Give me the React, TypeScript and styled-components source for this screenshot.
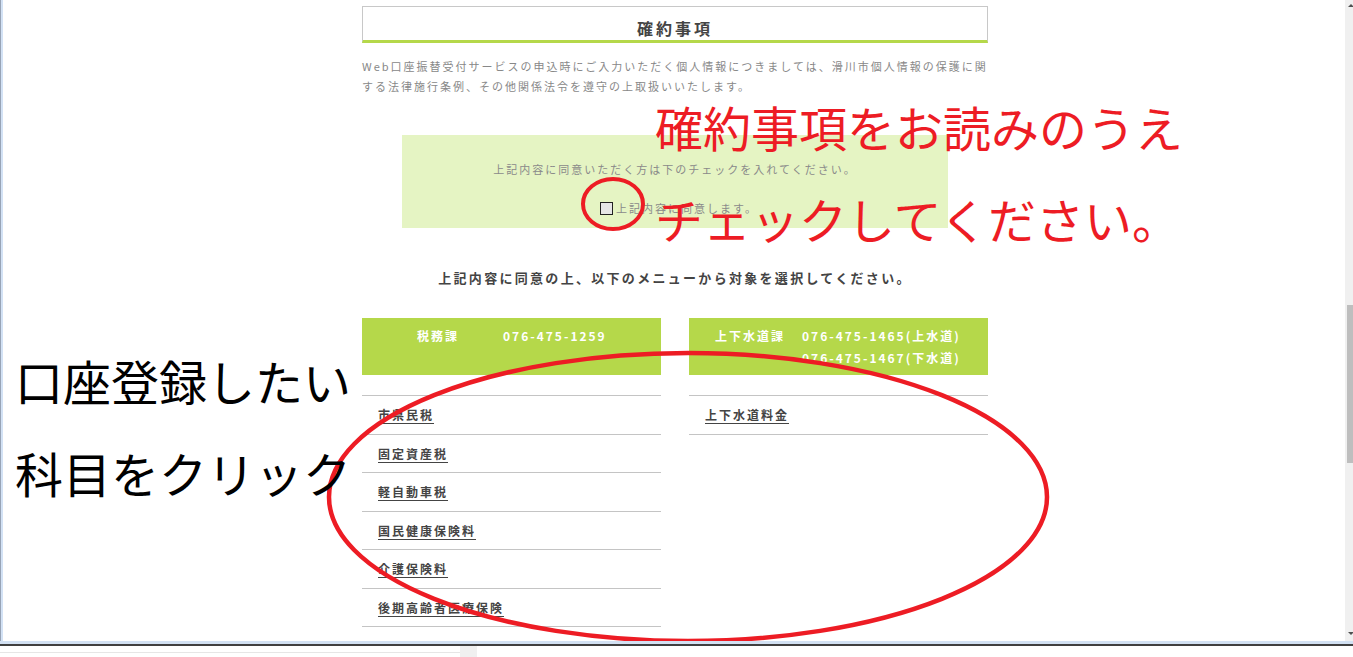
import React from 'react'
import styled, { createGlobalStyle } from 'styled-components'

const GlobalStyle = createGlobalStyle`
  html, body {
    margin: 0;
    padding: 0;
    background: #fff;
  }
  body {
    font-family: "Noto Sans CJK JP", "Noto Sans", sans-serif;
  }
`

const GREEN = '#b5d84a'
const PAINT_RED = '#ed1c24'

const Screen = styled.div`
  position: relative;
  width: 1353px;
  height: 657px;
  overflow: hidden;
  background: #fff;
  display: flex;
  flex-direction: column;
`

const WindowBody = styled.div`
  display: flex;
  height: 641px;
  flex: none;
`

const LeftEdge = styled.div`
  width: 3px;
  box-sizing: border-box;
  border-left: 1px solid #98a4b6;
  background: #d3e2f5;
`

const Viewport = styled.div`
  flex: 1;
  overflow: hidden;
  padding-left: 2px;
`

const ScrollBar = styled.div`
  width: 8px;
  background: #f0f0f0;
  display: flex;
  flex-direction: column;
  overflow: hidden;
`

const Arrow = styled.div<{ $down?: boolean }>`
  width: 0;
  height: 0;
  margin-left: 3px;
  border-left: 3px solid transparent;
  border-right: 3px solid transparent;
  ${(p) =>
    p.$down
      ? `border-top: 3px solid #505050; margin-top: auto; margin-bottom: 6px;`
      : `border-bottom: 3px solid #505050; margin-top: 4px;`}
`

const Thumb = styled.div`
  width: 6px;
  margin-left: 2px;
  margin-top: 298px;
  height: 158px;
  background: #bebebe;
`

const BottomEdge = styled.div`
  height: 5px;
  box-sizing: border-box;
  background: #d2e1f3;
  border-bottom: 2px solid #404040;
`

const StatusStrip = styled.div`
  flex: 1;
  display: flex;
`

const StatusLeft = styled.div`
  width: 460px;
  padding-top: 6px;
`

const StatusRule = styled.div`
  height: 1px;
  background: #e6e6e6;
`

const StatusGrip = styled.div`
  width: 17px;
  background: #f0f0f0;
`

const Page = styled.div`
  width: 626px;
  margin: 0 auto;
  padding-top: 6px;
  color: #444;
`

const TitleBox = styled.h2`
  box-sizing: border-box;
  height: 37px;
  margin: 0;
  padding-top: 11px;
  border: 1px solid #c8c8c8;
  border-bottom: 3px solid ${GREEN};
  text-align: center;
  font-size: 16px;
  line-height: 20px;
  font-weight: bold;
  letter-spacing: 3px;
  color: #444;
`

const Lead = styled.p`
  margin: 13px 0 0;
  font-size: 11px;
  line-height: 20px;
  letter-spacing: 2px;
  color: #888;
`

const AgreeBox = styled.div`
  box-sizing: border-box;
  height: 93px;
  margin: 39px 40px 0;
  padding-top: 24px;
  background: #e5f4c3;
  text-align: center;
  font-size: 11px;
  line-height: 20px;
  letter-spacing: 2px;
  color: #8a8a8a;
`

const AgreeLine = styled.div`
  margin: 0;
`

const CheckRow = styled.label`
  margin-top: 19px;
  display: flex;
  justify-content: center;
  align-items: center;
  gap: 3px;
  padding-left: 8px;
`

const Check = styled.input`
  appearance: none;
  margin: 0;
  width: 13px;
  height: 13px;
  box-sizing: border-box;
  border: 1px solid #222;
  background: #e6e6e6;
`

const Instruction = styled.p`
  margin: 40px 0 0;
  text-align: center;
  font-size: 13px;
  line-height: 20px;
  letter-spacing: 2.3px;
  font-weight: bold;
  color: #444;
`

const Columns = styled.div`
  display: grid;
  grid-template-columns: 299px 299px;
  column-gap: 28px;
  margin-top: 30px;
`

const Section = styled.section``

const Header = styled.div<{ $pad: number; $gap: number }>`
  box-sizing: border-box;
  height: 57px;
  padding: 7px 0 0 ${(p) => p.$pad}px;
  display: flex;
  gap: ${(p) => p.$gap}px;
  background: ${GREEN};
  color: #fff;
  font-size: 12px;
  line-height: 22px;
  font-weight: bold;
  letter-spacing: 2px;
  white-space: nowrap;
`

const Phones = styled.div`
  display: flex;
  flex-direction: column;
`

const List = styled.ul`
  list-style: none;
  margin: 20px 0 0;
  padding: 0;
  border-bottom: 1px solid #c4c4c4;
`

const Item = styled.li`
  box-sizing: border-box;
  height: 38.5px;
  display: flex;
  align-items: center;
  padding-left: 16px;
  border-top: 1px solid #c4c4c4;
`

const ItemLink = styled.a`
  font-size: 12px;
  font-weight: bold;
  letter-spacing: 2px;
  color: #444;
  text-decoration: underline;
  text-underline-offset: 3px;
`

const Overlay = styled.div`
  position: absolute;
  inset: 0;
  pointer-events: none;
`

const Marks = styled.svg`
  position: absolute;
  left: 0;
  top: 0;
`

const Note = styled.div<{ $x: number; $y: number; $color: string }>`
  position: absolute;
  left: ${(p) => p.$x}px;
  top: ${(p) => p.$y}px;
  font-size: 48px;
  line-height: 92px;
  white-space: nowrap;
  color: ${(p) => p.$color};
  font-family: "Noto Sans CJK JP", sans-serif;
  font-weight: 400;
`

const taxItems = ['市県民税', '固定資産税', '軽自動車税', '国民健康保険料', '介護保険料', '後期高齢者医療保険']

export default function App() {
  return (
    <>
      <GlobalStyle />
      <Screen>
        <WindowBody>
          <LeftEdge />
          <Viewport>
            <Page>
              <TitleBox>確約事項</TitleBox>
              <Lead>
                Web口座振替受付サービスの申込時にご入力いただく個人情報につきましては、滑川市個人情報の保護に関
                <br />
                する法律施行条例、その他関係法令を遵守の上取扱いいたします。
              </Lead>
              <AgreeBox>
                <AgreeLine>上記内容に同意いただく方は下のチェックを入れてください。</AgreeLine>
                <CheckRow>
                  <Check type="checkbox" />
                  上記内容に同意します。
                </CheckRow>
              </AgreeBox>
              <Instruction>上記内容に同意の上、以下のメニューから対象を選択してください。</Instruction>
              <Columns>
                <Section>
                  <Header $pad={55} $gap={44}>
                    <span>税務課</span>
                    <span>076-475-1259</span>
                  </Header>
                  <List>
                    {taxItems.map((t) => (
                      <Item key={t}>
                        <ItemLink href="#">{t}</ItemLink>
                      </Item>
                    ))}
                  </List>
                </Section>
                <Section>
                  <Header $pad={26} $gap={17}>
                    <span>上下水道課</span>
                    <Phones>
                      <span>076-475-1465(上水道)</span>
                      <span>076-475-1467(下水道)</span>
                    </Phones>
                  </Header>
                  <List>
                    <Item>
                      <ItemLink href="#">上下水道料金</ItemLink>
                    </Item>
                  </List>
                </Section>
              </Columns>
            </Page>
          </Viewport>
          <ScrollBar>
            <Arrow />
            <Thumb />
            <Arrow $down />
          </ScrollBar>
        </WindowBody>
        <BottomEdge />
        <StatusStrip>
          <StatusLeft>
            <StatusRule />
          </StatusLeft>
          <StatusGrip />
        </StatusStrip>

        <Overlay>
          <Marks width="1353" height="641" viewBox="0 0 1353 641">
            <ellipse cx="613" cy="204" rx="30" ry="25" fill="none" stroke={PAINT_RED} strokeWidth="4" />
            <ellipse cx="688" cy="497" rx="359" ry="144" fill="none" stroke={PAINT_RED} strokeWidth="4.5" />
          </Marks>
          <Note $x={655} $y={80} $color={PAINT_RED}>
            確約事項をお読みのうえ
            <br />
            チェックしてください。
          </Note>
          <Note $x={15} $y={334} $color="#000">
            口座登録したい
            <br />
            科目をクリック
          </Note>
        </Overlay>
      </Screen>
    </>
  )
}
